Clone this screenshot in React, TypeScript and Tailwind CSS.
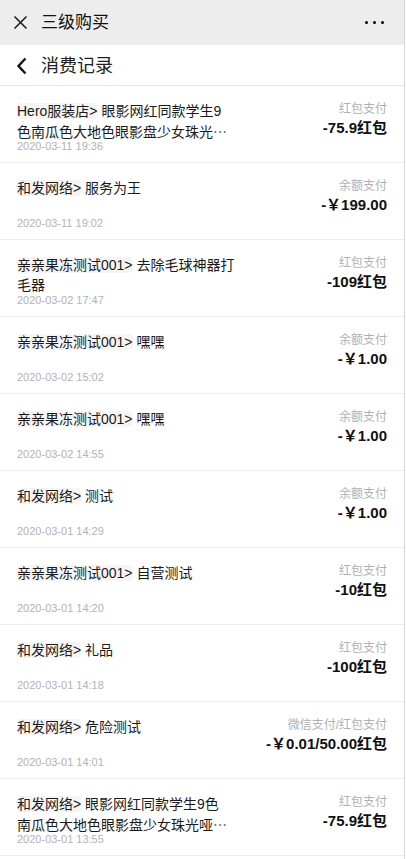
import React from 'react';

type Record = {
  shop: string;
  lines: string[];
  time: string;
  method: string;
  amount: string;
  more?: boolean;
};

const records: Record[] = [
  {
    shop: 'Hero服装店>',
    lines: ['眼影网红同款学生9', '色南瓜色大地色眼影盘少女珠光'],
    more: true,
    time: '2020-03-11 19:36',
    method: '红包支付',
    amount: '-75.9红包',
  },
  { shop: '和发网络>', lines: ['服务为王'], time: '2020-03-11 19:02', method: '余额支付', amount: '-￥199.00' },
  {
    shop: '亲亲果冻测试001>',
    lines: ['去除毛球神器打', '毛器'],
    time: '2020-03-02 17:47',
    method: '红包支付',
    amount: '-109红包',
  },
  { shop: '亲亲果冻测试001>', lines: ['嘿嘿'], time: '2020-03-02 15:02', method: '余额支付', amount: '-￥1.00' },
  { shop: '亲亲果冻测试001>', lines: ['嘿嘿'], time: '2020-03-02 14:55', method: '余额支付', amount: '-￥1.00' },
  { shop: '和发网络>', lines: ['测试'], time: '2020-03-01 14:29', method: '余额支付', amount: '-￥1.00' },
  { shop: '亲亲果冻测试001>', lines: ['自营测试'], time: '2020-03-01 14:20', method: '红包支付', amount: '-10红包' },
  { shop: '和发网络>', lines: ['礼品'], time: '2020-03-01 14:18', method: '红包支付', amount: '-100红包' },
  {
    shop: '和发网络>',
    lines: ['危险测试'],
    time: '2020-03-01 14:01',
    method: '微信支付/红包支付',
    amount: '-￥0.01/50.00红包',
  },
  {
    shop: '和发网络>',
    lines: ['眼影网红同款学生9色', '南瓜色大地色眼影盘少女珠光哑'],
    more: true,
    time: '2020-03-01 13:55',
    method: '红包支付',
    amount: '-75.9红包',
  },
];

const font = { fontFamily: '"Liberation Sans", "Noto Sans CJK SC", sans-serif' };
const cjk = { fontFamily: '"Noto Sans CJK SC", sans-serif' };

const Title: React.FC<{ r: Record }> = ({ r }) => (
  <div className="h-[40px] text-[14px] leading-[20px] text-[#1a1a1a]">
    {r.lines.map((line, i) => (
      <div key={i} className="whitespace-nowrap">
        {i === 0 && <span className="bg-[#f5f5f5] rounded-sm">{r.shop}</span>}
        {i === 0 ? ' ' : ''}
        {line}
        {r.more && i === r.lines.length - 1 && (
          <span className="text-[#444]" style={cjk}>
            ⋯
          </span>
        )}
      </div>
    ))}
  </div>
);

const App: React.FC = () => {
  return (
    <div className="w-[405px] min-h-screen bg-white border-r border-[#d6d6d6]" style={font}>
      {/* top bar */}
      <div className="h-[45px] bg-[#ededed] flex items-center pl-[13px] pr-[20px]">
        <svg width="15" height="15" viewBox="0 0 15 15" className="shrink-0">
          <path d="M1.5 1.5 L13.5 13.5 M13.5 1.5 L1.5 13.5" stroke="#1a1a1a" strokeWidth="1.5" fill="none" />
        </svg>
        <span className="ml-[13px] text-[17px] text-[#111]">三级购买</span>
        <div className="ml-auto flex gap-[5px]">
          <span className="w-[3px] h-[3px] bg-black rounded-full" />
          <span className="w-[3px] h-[3px] bg-black rounded-full" />
          <span className="w-[3px] h-[3px] bg-black rounded-full" />
        </div>
      </div>

      {/* header */}
      <div className="h-[41px] flex items-center border-b border-[#e6e6e6] pl-[16px] pt-[2px]">
        <svg width="12" height="18" viewBox="0 0 12 18" className="shrink-0">
          <path d="M9.5 1.5 L2.5 9 L9.5 16.5" stroke="#111" strokeWidth="2.4" fill="none" />
        </svg>
        <span className="ml-[13px] text-[18px] text-[#222]">消费记录</span>
      </div>

      {records.map((r, i) => (
        <div key={i} className="h-[77px] flex justify-between px-[17px] border-b border-[#ececec]">
          <div className="pt-[15px]">
            <Title r={r} />
            <div className="-mt-[1px] text-[11px] leading-[13px] text-[#b3b3b3]">{r.time}</div>
          </div>
          <div className="pt-[15px] flex flex-col items-end">
            <div className="text-[12px] leading-[16px] text-[#b0b0b0]">{r.method}</div>
            <div className="mt-[1px] text-[15px] leading-[20px] font-bold text-[#111]">{r.amount}</div>
          </div>
        </div>
      ))}
    </div>
  );
};

export default App;
